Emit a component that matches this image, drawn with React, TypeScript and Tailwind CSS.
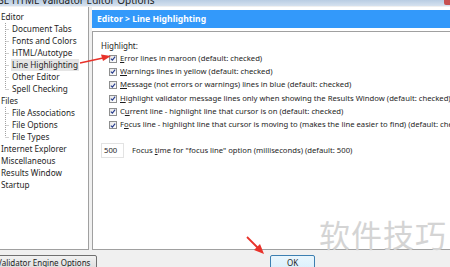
import React from "react";

const tree: { label: string; depth: number; last?: boolean; selected?: boolean }[] = [
  { label: "Editor", depth: 0 },
  { label: "Document Tabs", depth: 1 },
  { label: "Fonts and Colors", depth: 1 },
  { label: "HTML/Autotype", depth: 1 },
  { label: "Line Highlighting", depth: 1, selected: true },
  { label: "Other Editor", depth: 1 },
  { label: "Spell Checking", depth: 1, last: true },
  { label: "Files", depth: 0 },
  { label: "File Associations", depth: 1 },
  { label: "File Options", depth: 1 },
  { label: "File Types", depth: 1, last: true },
  { label: "Internet Explorer", depth: 0 },
  { label: "Miscellaneous", depth: 0 },
  { label: "Results Window", depth: 0 },
  { label: "Startup", depth: 0 },
];

// text with one underlined access key
const options: [string, string, string][] = [
  ["", "E", "rror lines in maroon (default: checked)"],
  ["", "W", "arnings lines in yellow (default: checked)"],
  ["", "M", "essage (not errors or warnings) lines in blue (default: checked)"],
  ["", "H", "ighlight validator message lines only when showing the Results Window (default: checked)"],
  ["C", "u", "rrent line - highlight line that cursor is on (default: checked)"],
  ["F", "o", "cus line - highlight line that cursor is moving to (makes the line easier to find) (default: checked)"],
];

const Connector = ({ last }: { last?: boolean }) => (
  <svg width="8" height="12" className="shrink-0">
    <line x1="4.5" y1="0" x2="4.5" y2={last ? 6 : 12} stroke="#a0a0a0" strokeDasharray="1 1" />
    <line x1="4.5" y1="6.5" x2="8" y2="6.5" stroke="#a0a0a0" strokeDasharray="1 1" />
  </svg>
);

const Check = () => (
  <span className="w-[8px] h-[8px] shrink-0 border border-[#8e8f8f] bg-gradient-to-br from-[#e6e6e6] to-white flex items-center justify-center">
    <svg width="7" height="7" viewBox="0 0 7 7">
      <path d="M1 3.6 L2.8 5.4 L6 1.2" fill="none" stroke="#2a3f8f" strokeWidth="1.4" />
    </svg>
  </span>
);

export default function App() {
  return (
    <div
      className="relative w-[450px] h-[267px] overflow-hidden bg-[#f0f0f0] text-[#1e1e1e]"
      style={{ fontFamily: '"Noto Sans", "Liberation Sans", sans-serif' }}
    >
      {/* title bar, mostly cut off */}
      <div className="h-[6px] bg-gradient-to-b from-[#b9cde3] to-[#d6e2ef] overflow-hidden flex justify-between">
        <span className="text-[10px] leading-[10px] -mt-[5px] -ml-[8px] text-[#222] whitespace-nowrap">
          CSE HTML Validator Editor Options
        </span>
        <span className="w-[6px] h-[5px] bg-[#c75050] rounded-bl-[2px]" />
      </div>

      <div className="flex h-[243px] mt-[1px]">
        {/* tree */}
        <div className="w-[89px] shrink-0 bg-white border-r border-b border-[#a0a0a0] pt-[4px] text-[8.2px] leading-[12px]">
          {tree.map((t) => (
            <div key={t.label} className="flex h-[12px] items-center">
              {t.depth === 1 && (
                <>
                  <span className="w-[1px] shrink-0" />
                  <Connector last={t.last} />
                  <span className="w-[2px] shrink-0" />
                </>
              )}
              <span className={`whitespace-nowrap ${t.depth === 0 ? "pl-[1px]" : "px-[1px]"} ${t.selected ? "bg-[#e5e5e5]" : ""}`}>
                {t.label}
              </span>
            </div>
          ))}
        </div>

        {/* right side */}
        <div className="flex-1 ml-[3px] flex flex-col bg-white pt-[3px]">
          <div className="h-[18px] bg-[#3399fa] flex items-center pl-[5px] text-white font-bold text-[8.6px]">
            Editor &gt; Line Highlighting
          </div>
          <div className="mt-[3px] flex-1 border-t border-l border-b border-[#a0a0a0] pl-[8px] pt-[8px] text-[7.7px]">
            <div className="h-[12px] flex items-center text-[8px]">Highlight:</div>
            <div className="pl-[8px]">
              {options.map(([a, k, b]) => (
                <div key={b} className="h-[13.3px] flex items-center gap-[3px] whitespace-nowrap">
                  <Check />
                  <span>
                    {a}
                    <span className="underline">{k}</span>
                    {b}
                  </span>
                </div>
              ))}
            </div>
            <div className="mt-[11px] flex items-center gap-[8px] whitespace-nowrap">
              <span className="w-[23px] h-[15px] flex items-center pl-[2px] border border-[#e3e3e3]">500</span>
              <span>
                Focus <span className="underline">t</span>ime for "focus line" option (milliseconds) (default: 500)
              </span>
            </div>
          </div>
        </div>
      </div>

      {/* buttons */}
      <div className="flex items-start mt-[5px] text-[8px]">
        <button className="w-[107px] h-[16px] -ml-[10px] pl-[6px] border border-[#707070] rounded-[2px] bg-gradient-to-b from-[#f2f2f2] to-[#dcdcdc] text-left whitespace-nowrap">
          Validator Engine Options
        </button>
        <button className="ml-[173px] w-[45px] h-[16px] border border-[#3c7fb1] rounded-[2px] bg-gradient-to-b from-[#eaf6fd] to-[#d9f0fc] text-center">
          OK
        </button>
      </div>

      {/* watermark */}
      <div
        className="absolute left-[319px] top-[216px] text-[31px] leading-[36px] text-[#d4d4d4] tracking-[1px]"
        style={{ fontFamily: '"Noto Sans CJK SC", sans-serif' }}
      >
        软件技巧
      </div>

      {/* red annotation arrows */}
      <svg className="absolute left-0 top-0" width="450" height="267">
        <line x1="80" y1="63" x2="103" y2="58" stroke="#e8322a" strokeWidth="1.6" />
        <polygon points="111,56 101,54.5 103,61" fill="#e8322a" />
        <line x1="247" y1="237" x2="258" y2="248" stroke="#e8322a" strokeWidth="1.8" />
        <polygon points="264,254 254,250 260,244" fill="#e8322a" />
      </svg>
    </div>
  );
}
